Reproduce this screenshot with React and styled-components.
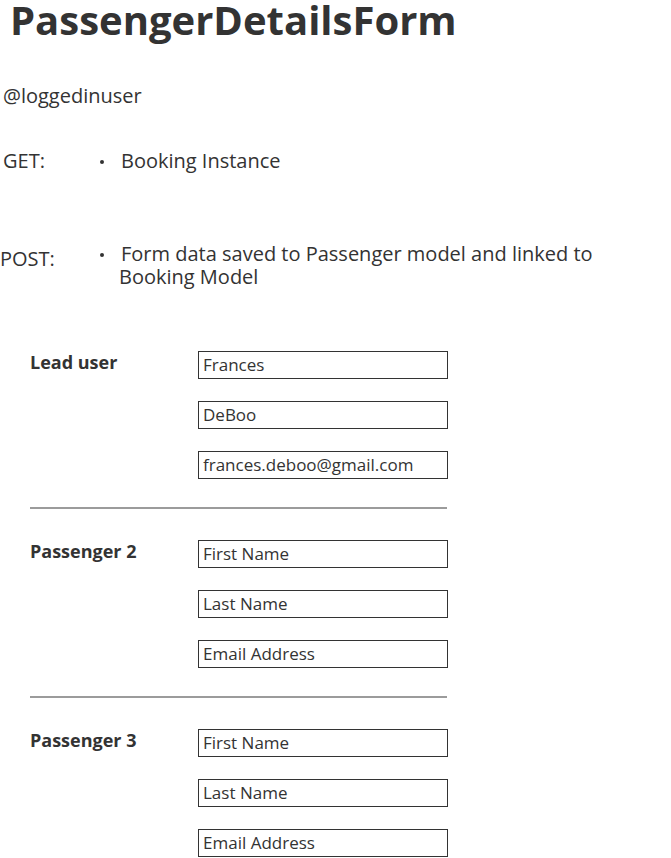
import styled, { createGlobalStyle } from "styled-components";

const GlobalStyle = createGlobalStyle`
  body {
    margin: 0;
    background: #ffffff;
    font-family: "Open Sans", "Liberation Sans", sans-serif;
    color: #333333;
  }
`;

const Page = styled.div`
  width: 671px;
  padding-top: 4px;
`;

const Title = styled.h1`
  margin: -4px 0 0 10px;
  font-size: 40px;
  line-height: 40px;
  font-weight: 700;
  color: #333333;
`;

const User = styled.div`
  margin: 44px 0 0 3px;
  font-size: 20px;
  line-height: 24px;
`;

const Endpoint = styled.div`
  display: flex;
  align-items: flex-start;
  margin-top: ${(p) => p.$top}px;
  margin-left: ${(p) => p.$left}px;
`;

const Method = styled.div`
  width: ${(p) => p.$width}px;
  margin-top: ${(p) => p.$shift || 0}px;
  font-size: 20px;
  line-height: 24px;
  flex-shrink: 0;
`;

const Items = styled.ul`
  margin: 0;
  padding: 0;
  list-style: none;
`;

const Item = styled.li`
  position: relative;
  padding-left: 21px;
  font-size: 20px;
  line-height: 23px;

  &::before {
    content: "";
    position: absolute;
    left: 0;
    top: 11px;
    width: 4px;
    height: 4px;
    border-radius: 50%;
    background: #333333;
  }
`;

const Wrapped = styled.span`
  display: inline-block;
  margin-left: -2px;
`;

const Form = styled.form`
  margin: 63px 0 0 30px;
  width: 417px;
`;

const Section = styled.div`
  display: grid;
  grid-template-columns: 168px 250px;
  row-gap: 22px;
  padding: ${(p) => (p.$first ? "0 0 28px" : "31px 0 28px")};
  border-bottom: ${(p) => (p.$last ? "none" : "2px solid #9b9b9b")};
`;

const Label = styled.div`
  grid-column: 1;
  grid-row: 1;
  font-size: 18px;
  font-weight: 700;
  line-height: 23px;
`;

const Field = styled.input`
  grid-column: 2;
  box-sizing: border-box;
  width: 250px;
  height: 28px;
  margin: 0;
  padding: 0 4px 2px;
  border: 1px solid #333333;
  border-radius: 0;
  font-family: "Open Sans", "Liberation Sans", sans-serif;
  font-size: 17px;
  color: #333333;
  background: #ffffff;
  outline: none;

  &::placeholder {
    color: #333333;
    opacity: 1;
  }
`;

const passengers = [
  { label: "Lead user", values: ["Frances", "DeBoo", "frances.deboo@gmail.com"] },
  { label: "Passenger 2", values: ["", "", ""] },
  { label: "Passenger 3", values: ["", "", ""] },
];

const placeholders = ["First Name", "Last Name", "Email Address"];

const App = () => {
  return (
    <Page>
      <GlobalStyle />
      <Title>PassengerDetailsForm</Title>
      <User>@loggedinuser</User>
      <Endpoint $top={41} $left={3}>
        <Method $width={97}>GET:</Method>
        <Items>
          <Item>Booking Instance</Item>
        </Items>
      </Endpoint>
      <Endpoint $top={69} $left={0}>
        <Method $width={100} $shift={5}>POST:</Method>
        <Items>
          <Item>
            Form data saved to Passenger model and linked to
            <br />
            <Wrapped>Booking Model</Wrapped>
          </Item>
        </Items>
      </Endpoint>
      <Form>
        {passengers.map((p, i) => (
          <Section key={p.label} $first={i === 0} $last={i === passengers.length - 1}>
            <Label>{p.label}</Label>
            {placeholders.map((ph, j) => (
              <Field key={ph} defaultValue={p.values[j]} placeholder={ph} />
            ))}
          </Section>
        ))}
      </Form>
    </Page>
  );
};

export default App;
